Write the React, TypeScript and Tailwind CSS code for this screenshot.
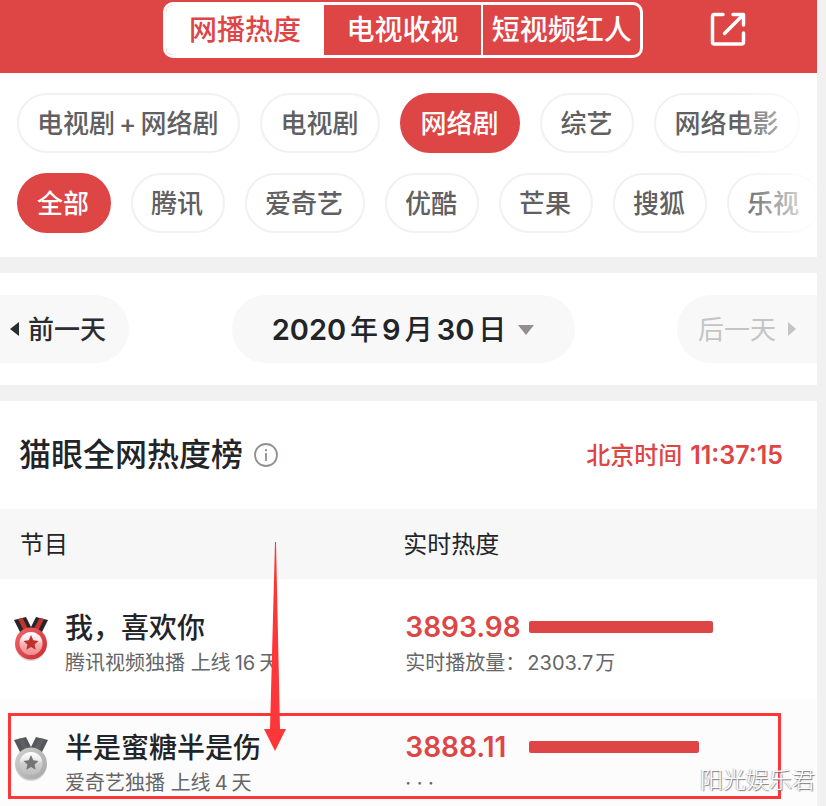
import clsx from "clsx";

const tabs = ["网播热度", "电视收视", "短视频红人"];

const platforms = ["全部", "腾讯", "爱奇艺", "优酷", "芒果", "搜狐", "乐视"];

const shows = [
    {title: "我，喜欢你", platform: "腾讯视频独播", days: 16, heat: "3893.98", bar: 184, plays: "2303.7", medal: "gold"},
    {title: "半是蜜糖半是伤", platform: "爱奇艺独播", days: 4, heat: "3888.11", bar: 170, plays: null, medal: "silver"},
];

function Chip({active, children}: { active?: boolean; children: React.ReactNode }) {
    return (
        <button
            type="button"
            className={clsx(
                "h-15 shrink-0 whitespace-nowrap rounded-full border-2 pl-[18px] pr-5 pt-[2px] text-[26px] font-medium leading-none",
                active ? "border-[#de4545] bg-[#de4545] text-white" : "border-[#f1f1f1] bg-white text-[#606062]"
            )}
        >
            {children}
        </button>
    )
}

function ChipRow({children}: { children: React.ReactNode }) {
    return (
        <div className="relative overflow-hidden">
            <div className="flex gap-5 pl-[17px]">{children}</div>
            <div className="pointer-events-none absolute inset-y-0 right-0 w-20 bg-linear-to-r from-white/0 to-white/90"/>
        </div>
    )
}

function Medal({kind}: { kind: string }) {
    const gold = kind === "gold";
    const dark = gold ? "#24262b" : "#56575b";
    const mid = gold ? "#c3342f" : "#5f6064";
    const star = gold ? "#c0302d" : "#737478";
    return (
        <svg width="36" height="46" viewBox="0 0 36 46" aria-hidden="true">
            <defs>
                <linearGradient id={kind + "Rim"} x1="0" y1="0" x2="1" y2="1">
                    <stop offset="0" stopColor={gold ? "#f4666a" : "#d0d0d0"}/>
                    <stop offset="1" stopColor={gold ? "#c92b30" : "#a6a6a8"}/>
                </linearGradient>
                <linearGradient id={kind + "Face"} x1="0" y1="0" x2="0" y2="1">
                    <stop offset="0" stopColor={gold ? "#ffffff" : "#ffffff"}/>
                    <stop offset="0.35" stopColor={gold ? "#fde4e4" : "#eaeaea"}/>
                    <stop offset="0.5" stopColor={gold ? "#f8b4b6" : "#cfcfd0"}/>
                    <stop offset="1" stopColor={gold ? "#f08a8c" : "#bcbcbe"}/>
                </linearGradient>
            </defs>
            <path d="M1 3 L13 0 L20 14 L8 17 Z" fill={dark}/>
            <path d="M5 2 L9.500 1 L16.500 15 L12 16 Z" fill={mid}/>
            <path d="M35 3 L23 0 L16 14 L28 17 Z" fill={dark}/>
            <path d="M31 2 L26.500 1 L19.500 15 L24 16 Z" fill={mid}/>
            <ellipse cx="18" cy="28.500" rx="15.500" ry="15.500" fill="#000000" opacity="0.15"/>
            <circle cx="18" cy="26.500" r="16" fill={`url(#${kind}Rim)`}/>
            <circle cx="18" cy="26.500" r="11.500" fill={`url(#${kind}Face)`}/>
            <path
                d="M18 18 L20.300 23.300 L25.500 23.900 L21.600 27.500 L22.700 32.700 L18 30.100 L13.300 32.700 L14.400 27.500 L10.500 23.900 L15.700 23.300 Z"
                fill={star}
            />
        </svg>
    )
}

function Header() {
    return (
        <header className="flex h-[73px] items-start bg-[#de4545] pt-[2px]">
            <nav className="ml-[20%] flex h-14 w-[480px] overflow-hidden rounded-[10px] border-[3px] border-white">
                {tabs.map((tab, i) => (
                    <button
                        key={tab}
                        type="button"
                        className={clsx(
                            "flex-1 whitespace-nowrap text-[28px] font-medium leading-none",
                            i === 0 ? "bg-white text-[#de4545]" : "text-white",
                            i === 2 && "border-l-2 border-white"
                        )}
                    >
                        {tab}
                    </button>
                ))}
            </nav>
            <button type="button" aria-label="分享" className="ml-auto mr-[71px] mt-[9px]">
                <svg width="36" height="36" viewBox="0 0 36 36" fill="none" stroke="#ffffff" strokeWidth="3.5"
                     strokeLinecap="round" strokeLinejoin="round">
                    <path d="M13 3.500 H4.500 Q2.500 3.500 2.500 5.500 V31 Q2.500 33 4.500 33 H31.500 Q33.500 33 33.500 31 V22"/>
                    <path d="M23 3.500 H33.500 V14"/>
                    <path d="M33 4 L14.500 22.500"/>
                </svg>
            </button>
        </header>
    )
}

function App() {
    return (
        <div className="min-h-screen bg-[#f1f1f1] pr-[9px] font-['Inter','Noto_Sans_CJK_SC',sans-serif] text-[#222428]">
            <Header/>

            {/* Filters */}
            <section className="flex flex-col gap-5 bg-white pb-6 pt-5">
                <ChipRow>
                    <Chip>电视剧<span className="mx-1">+</span>网络剧</Chip>
                    <Chip>电视剧</Chip>
                    <Chip active>网络剧</Chip>
                    <Chip>综艺</Chip>
                    <Chip>网络电影</Chip>
                </ChipRow>
                <ChipRow>
                    {platforms.map((name, i) => (
                        <Chip key={name} active={i === 0}>{name}</Chip>
                    ))}
                </ChipRow>
            </section>

            {/* Date picker */}
            <section className="mt-4 flex h-28 items-center justify-between bg-white">
                <button type="button"
                        className="flex h-17 w-[129px] items-center gap-[9px] rounded-r-full bg-[#f8f8f8] pl-[10px] text-[26px] font-medium text-[#2b2c30]">
                    <svg width="9" height="14" viewBox="0 0 9 14" fill="currentColor"><path d="M9 0 V14 L0 7 Z"/></svg>
                    前一天
                </button>
                <button type="button"
                        className="flex h-17 w-[343px] items-center justify-center gap-3 rounded-full bg-[#f8f8f8] pt-[2px] text-[28px] font-medium">
                    <span className="flex items-center gap-1">
                        <span className="text-[29px] font-semibold">2020</span>
                        年
                        <span className="text-[29px] font-semibold">9</span>
                        月
                        <span className="text-[29px] font-semibold">30</span>
                        日
                    </span>
                    <svg width="16" height="10" viewBox="0 0 16 10" fill="#948e90"><path d="M0 0 H16 L8 10 Z"/></svg>
                </button>
                <button type="button" disabled
                        className="flex h-17 w-[140px] items-center gap-3 rounded-l-full bg-[#f8f8f8] pl-[21px] text-[26px] text-[#c4c4c4]">
                    后一天
                    <svg width="8" height="14" viewBox="0 0 8 14" fill="currentColor"><path d="M0 0 V14 L8 7 Z"/></svg>
                </button>
            </section>

            {/* Ranking */}
            <main className="relative mt-4 bg-white">
                <div className="flex h-27 items-center justify-between pl-[19px] pr-[34px]">
                    <div className="flex items-center gap-[11px]">
                        <h1 className="text-[32px] font-medium leading-none">猫眼全网热度榜</h1>
                        <button type="button" aria-label="榜单说明">
                            <svg width="24" height="24" viewBox="0 0 24 24" fill="none" stroke="#948e90" strokeWidth="1.8">
                                <circle cx="12" cy="12" r="11"/>
                                <path d="M12 10 V18 M12 6 V8.200"/>
                            </svg>
                        </button>
                    </div>
                    <p className="flex items-center gap-2 pt-[2px] text-[24px] font-medium text-[#de4545]">
                        北京时间 <span className="text-[25px] font-semibold">11:37:15</span>
                    </p>
                </div>

                <table className="w-full table-fixed text-left">
                    <thead>
                        <tr className="h-[70px] bg-[#f7f7f7] text-[24px]">
                            <th scope="col" className="w-[49%] pl-5 pt-[2px] font-normal">节目</th>
                            <th scope="col" className="pl-[3px] pt-[2px] font-normal">实时热度</th>
                        </tr>
                    </thead>
                    <tbody>
                        {shows.map((show) => (
                            <tr key={show.title} className="align-top even:bg-[#fcfcfc]">
                                <td className="h-[120px] pl-[13px] pt-7">
                                    <div className="flex items-start gap-4">
                                        <div className="pt-[10px]">
                                            <Medal kind={show.medal}/>
                                        </div>
                                        <div className="whitespace-nowrap pt-px">
                                            <p className="text-[28px] font-medium leading-10">{show.title}</p>
                                            <p className="text-[20px] leading-[30px] text-[#666668]">
                                                {show.platform} 上线<span className="mx-1">{show.days}</span>天
                                            </p>
                                        </div>
                                    </div>
                                </td>
                                <td className="h-[120px] pl-[5px] pt-7">
                                    <div className="flex h-10 items-center">
                                        <span className="w-[124px] text-[28px] font-semibold text-[#de4545]">{show.heat}</span>
                                        <span className="h-3 rounded-[2px] bg-[#de4545]" style={{width: show.bar}}/>
                                    </div>
                                    <p className="whitespace-nowrap pt-px text-[20px] leading-[30px] text-[#666668]">
                                        {show.plays ? <>实时播放量：<span className="mx-[2px]">{show.plays}</span>万</> : "· · ·"}
                                    </p>
                                </td>
                            </tr>
                        ))}
                    </tbody>
                </table>

                {/* Annotations */}
                <div className="pointer-events-none absolute left-2 right-9 top-[312px] h-[86px] border-[3px] border-[#fd3737]"/>
                <svg className="pointer-events-none absolute left-[264px] top-[141px]" width="22" height="210" viewBox="0 0 22 210"
                     fill="#fd3737">
                    <path d="M11 0 H12 L16 187 H22 L11 209 L0 187 H6 Z"/>
                </svg>
                <span className="pointer-events-none absolute right-[2px] top-[362px] text-[23px] font-light text-white [text-shadow:1px_1px_1px_#777,-1px_0_1px_#bbb]">
                    阳光娱乐君
                </span>
            </main>
        </div>
    )
}

export default App
